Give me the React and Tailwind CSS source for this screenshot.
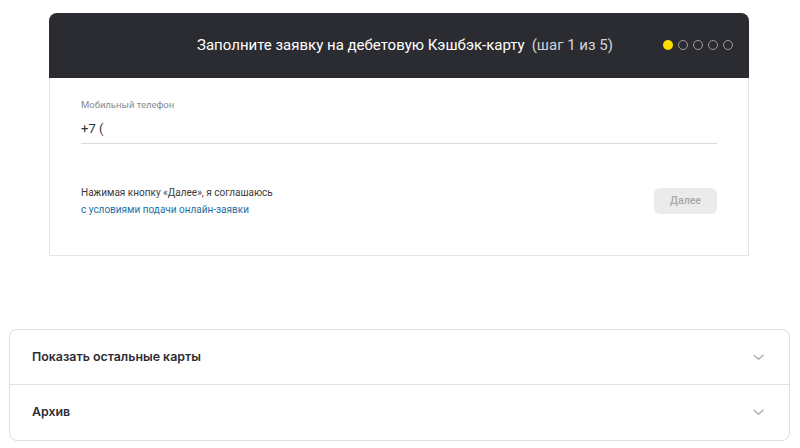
import React from "react";

function Chevron() {
  return (
    <svg width="11" height="7" viewBox="0 0 11 7" fill="none">
      <path d="M1 1.2L5.5 5.2L10 1.2" stroke="#a6a6a6" strokeWidth="1.2" strokeLinecap="round" strokeLinejoin="round" />
    </svg>
  );
}

export default function App() {
  return (
    <div className="w-[800px] h-[448px] bg-white overflow-hidden" style={{ fontFamily: "Inter, 'Noto Sans', sans-serif" }}>
      <div className="pt-[13px]">
        <div className="ml-[49px] w-[700px] rounded-t-[8px] border border-[#e4e4e4] border-t-0">
          <div className="h-[65px] bg-[#2b2c32] rounded-t-[8px] -mx-px flex items-center relative">
            <div className="flex-1 flex justify-center pl-[12px] font-['Roboto']">
              <span className="text-white text-[15px]">Заполните заявку на дебетовую Кэшбэк-карту</span>
              <span className="text-[#d4d4d6] text-[15px] ml-[7px]">(шаг 1 из 5)</span>
            </div>
            <div className="absolute right-[16px] top-[27px] flex gap-[5px]">
              <span className="w-[10px] h-[10px] rounded-full bg-[#ffdd00]" />
              <span className="w-[10px] h-[10px] rounded-full border border-[#9c9ca0]" />
              <span className="w-[10px] h-[10px] rounded-full border border-[#9c9ca0]" />
              <span className="w-[10px] h-[10px] rounded-full border border-[#9c9ca0]" />
              <span className="w-[10px] h-[10px] rounded-full border border-[#9c9ca0]" />
            </div>
          </div>
          <div className="px-[31px] pt-[21px] pb-[37px] font-['Roboto']">
            <div className="text-[9.5px] text-[#8a8a8e] leading-[12px]">Мобильный телефон</div>
            <div className="mt-[10px] text-[13px] text-[#333] leading-[16px] pb-[6px] border-b border-[#d9d9d9]">+7 (</div>
            <div className="mt-[40px] flex items-center justify-between">
              <div className="text-[10px] leading-[17px]">
                <div className="text-[#3a3a3e]">Нажимая кнопку «Далее», я соглашаюсь</div>
                <div className="text-[#1d6fa5]">с условиями подачи онлайн-заявки</div>
              </div>
              <div className="w-[63px] h-[26px] rounded-[6px] bg-[#ebebeb] flex items-center justify-center text-[10.5px] font-medium text-[#a8a8a8]">Далее</div>
            </div>
          </div>
        </div>
      </div>
      <div className="mt-[73px] ml-[9px] w-[781px] rounded-[8px] border border-[#dedede]">
        <div className="h-[55px] flex items-center justify-between pl-[22px] pr-[25px] border-b border-[#e2e2e2]">
          <span className="text-[12.4px] font-semibold text-[#2d2d33]">Показать остальные карты</span>
          <Chevron />
        </div>
        <div className="h-[55px] flex items-center justify-between pl-[22px] pr-[25px]">
          <span className="text-[12.4px] font-semibold text-[#2d2d33]">Архив</span>
          <Chevron />
        </div>
      </div>
    </div>
  );
}
